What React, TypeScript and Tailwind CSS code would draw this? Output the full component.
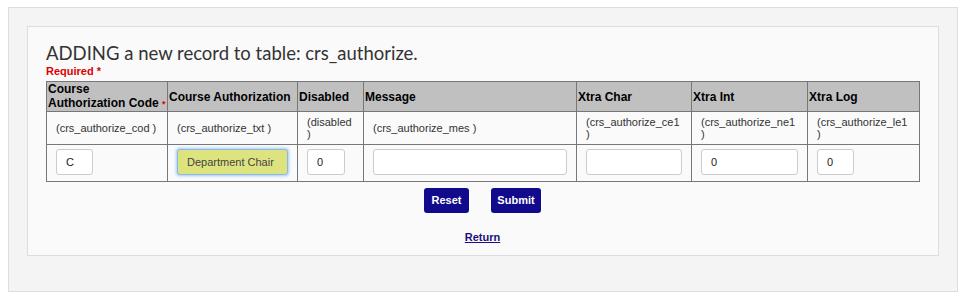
const columns = [
  { label: "Course Authorization", field: "(crs_authorize_txt )", w: "w-[130px]" },
  { label: "Disabled", field: "(disabled )", w: "w-[66px]" },
  { label: "Message", field: "(crs_authorize_mes )", w: "w-[213px]" },
  { label: "Xtra Char", field: "(crs_authorize_ce1 )", w: "w-[115px]" },
  { label: "Xtra Int", field: "(crs_authorize_ne1 )", w: "w-[116px]" },
  { label: "Xtra Log", field: "(crs_authorize_le1 )", w: "w-[112px]" },
]

const inputBase =
  "block h-[26px] rounded-[3px] border pl-[9px] text-[11px] outline-none"
const plain = `${inputBase} border-[#cccccc] bg-white text-[#222]`

export default function App() {
  return (
    <div className="min-h-screen bg-white pl-2 pr-[8px] pt-[7px] font-['Liberation_Sans',Arial,sans-serif]">
      <div className="h-[285px] w-[950px] border border-[#dddddd] bg-[#f4f4f4] px-[18px] pt-[18px]">
        <div className="h-[230px] w-[912px] border border-[#dddddd] bg-[#fafafa] px-[18px] pt-[15px]">
          <h1 className="font-['Lato',sans-serif] text-[18.5px] font-normal leading-[22px] text-[#333]">
            ADDING a new record to table: crs_authorize.
          </h1>
          <div className="mt-[1px] text-[11px] font-bold leading-[13px] text-[#dd0000]">Required *</div>

          <table className="mt-[3px] w-[873px] table-fixed border-collapse">
            <thead>
              <tr className="h-[30px] bg-[#c0c0c0]">
                <th className="w-[121px] border border-[#777] px-[1px] text-left align-middle text-[12px] font-bold leading-[14px] text-black">
                  Course
                  <br />
                  <span className="whitespace-nowrap">
                    Authorization Code <span className="text-[9px] text-[#dd0000]">*</span>
                  </span>
                </th>
                {columns.map((c) => (
                  <th
                    key={c.label}
                    className={`${c.w} border border-[#777] px-[1px] text-left align-middle text-[12px] font-bold leading-[14px] text-black`}
                  >
                    {c.label}
                  </th>
                ))}
              </tr>
            </thead>
            <tbody>
              <tr className="h-[33px]">
                <td className="border border-[#777] px-[9px] text-[11px] leading-[12px] text-[#333]">
                  (crs_authorize_cod )
                </td>
                {columns.map((c) => (
                  <td key={c.field} className="border border-[#777] px-[9px] text-[11px] leading-[12px] text-[#333]">
                    {c.field}
                  </td>
                ))}
              </tr>
              <tr className="h-[37px]">
                <td className="border border-[#777] px-[9px] pb-[6px] pt-[3px]">
                  <input className={`${plain} w-[37px]`} defaultValue="C" />
                </td>
                <td className="border border-[#777] px-[9px] pb-[6px] pt-[3px]">
                  <input
                    className={`${inputBase} w-[111px] border-[#8ab8e8] bg-[#dde37f] text-[#444] shadow-[0_0_3px_1px_rgba(102,175,233,0.6)]`}
                    defaultValue="Department Chair"
                  />
                </td>
                <td className="border border-[#777] px-[9px] pb-[6px] pt-[3px]">
                  <input className={`${plain} w-[38px]`} defaultValue="0" />
                </td>
                <td className="border border-[#777] px-[9px] pb-[6px] pt-[3px]">
                  <input className={`${plain} w-[194px]`} defaultValue="" />
                </td>
                <td className="border border-[#777] px-[9px] pb-[6px] pt-[3px]">
                  <input className={`${plain} w-[96px]`} defaultValue="" />
                </td>
                <td className="border border-[#777] px-[9px] pb-[6px] pt-[3px]">
                  <input className={`${plain} w-[97px]`} defaultValue="0" />
                </td>
                <td className="border border-[#777] px-[9px] pb-[6px] pt-[3px]">
                  <input className={`${plain} w-[37px]`} defaultValue="0" />
                </td>
              </tr>
            </tbody>
          </table>

          <div className="mt-[6px] flex w-[873px] justify-center gap-[22px]">
            <button className="h-[25px] w-[45px] rounded-[3px] bg-[#110a8c] text-[11px] font-bold text-white">
              Reset
            </button>
            <button className="h-[25px] w-[50px] rounded-[3px] bg-[#110a8c] text-[11px] font-bold text-white">
              Submit
            </button>
          </div>

          <div className="mt-[16px] w-[873px] text-center leading-[14px]">
            <a href="#" className="text-[11px] font-bold text-[#1a1080] underline">
              Return
            </a>
          </div>
        </div>
      </div>
    </div>
  )
}
